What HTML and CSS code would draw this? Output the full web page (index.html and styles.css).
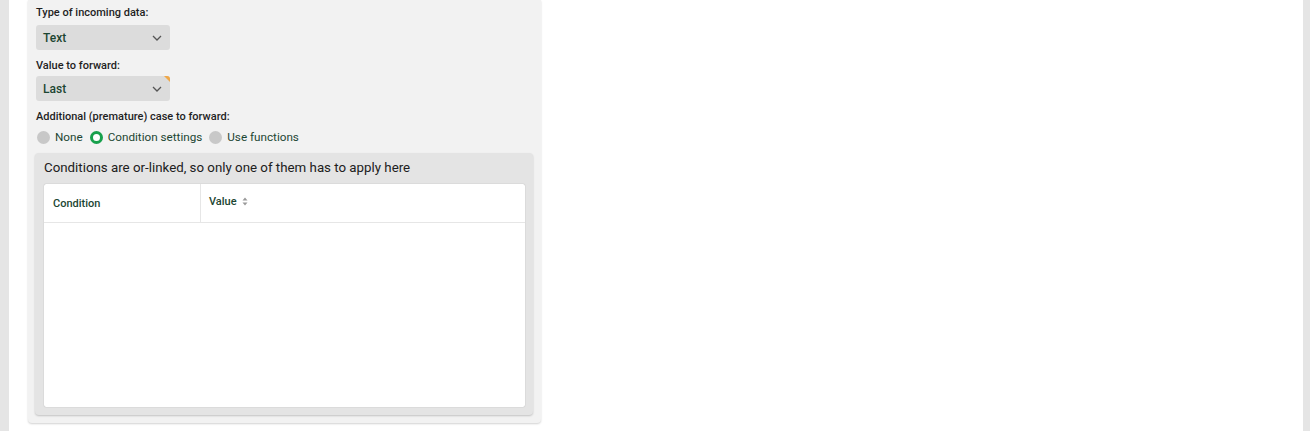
FILE: index.html
```html
<!DOCTYPE html>
<html>
<head>
<meta charset="utf-8">
<link rel="stylesheet" href="styles.css">
</head>
<body>
<div class="page">
  <div class="strip-left"></div>
  <div class="main">
    <div class="panel">
      <div class="label first">Type of incoming data:</div>
      <div class="select first-select">
        <span>Text</span>
        <svg class="chev" width="10" height="6" viewBox="0 0 10 6"><path d="M1 1 L5 5 L9 1" fill="none" stroke="#555" stroke-width="1.3"/></svg>
      </div>
      <div class="label">Value to forward:</div>
      <div class="select">
        <span>Last</span>
        <svg class="chev" width="10" height="6" viewBox="0 0 10 6"><path d="M1 1 L5 5 L9 1" fill="none" stroke="#555" stroke-width="1.3"/></svg>
        <span class="corner"></span>
      </div>
      <div class="label">Additional (premature) case to forward:</div>
      <div class="radios">
        <label class="radio"><span class="dot"></span>None</label>
        <label class="radio"><span class="dot on"></span>Condition settings</label>
        <label class="radio"><span class="dot"></span>Use functions</label>
      </div>
      <div class="inner">
        <div class="inner-title">Conditions are or-linked, so only one of them has to apply here</div>
        <div class="table">
          <div class="thead">
            <div class="th col1">Condition</div>
            <div class="th col2">Value
              <svg class="sort" width="6" height="9" viewBox="0 0 6 9"><path d="M3 0.5 L5.5 3.5 H0.5 Z M3 8.5 L5.5 5.5 H0.5 Z" fill="#9a9a9a"/></svg>
            </div>
          </div>
          <div class="tbody"></div>
        </div>
      </div>
    </div>
  </div>
  <div class="strip-right"></div>
</div>
</body>
</html>
```
FILE: styles.css
```css
html, body {
  margin: 0;
  padding: 0;
  background: #ffffff;
  font-family: Roboto, "Liberation Sans", Arial, sans-serif;
}
.page {
  display: flex;
  height: 431px;
  overflow: hidden;
}
.strip-left {
  width: 9px;
  background: #e5e5e5;
  flex: none;
}
.strip-right {
  width: 7px;
  background: #e5e5e5;
  flex: none;
}
.main {
  flex: 1;
  padding-left: 19px;
}
.panel {
  width: 498px;
  background: #f2f2f2;
  padding: 0 8px 8px 7px;
  border-radius: 0 0 4px 4px;
  box-shadow: 0 1px 2px rgba(0,0,0,0.18);
}
.label {
  font-size: 11px;
  font-weight: 500;
  color: #1f1f1f;
  line-height: 14px;
  margin-top: 9px;
  margin-left: 1px;
}
.label.first {
  padding-top: 6px;
  margin-top: 0;
}
.select {
  position: relative;
  width: 134px;
  height: 25px;
  margin-top: 3px;
  margin-left: 1px;
  background: #dcdcdc;
  border-radius: 3px;
  display: flex;
  align-items: center;
  justify-content: space-between;
  padding: 0 8px 0 7px;
  box-sizing: border-box;
  font-size: 12px;
  font-weight: 500;
  color: #1c4632;
}
.select.first-select {
  margin-top: 5px;
}
.chev {
  display: block;
}
.corner {
  position: absolute;
  right: 0;
  top: 0;
  width: 0;
  height: 0;
  border-top: 6px solid #f0a848;
  border-left: 6px solid transparent;
  border-top-right-radius: 3px;
}
.radios {
  display: flex;
  align-items: center;
  height: 14px;
  margin-top: 6px;
  margin-left: 2px;
}
.radio {
  display: flex;
  align-items: center;
  font-size: 11.7px;
  color: #1c4632;
  margin-right: 7px;
}
.dot {
  width: 13px;
  height: 13px;
  border-radius: 50%;
  background: #c8c8c8;
  margin-right: 5px;
  box-sizing: border-box;
}
.dot.on {
  background: #ffffff;
  border: 3.5px solid #17a04c;
}
.inner {
  margin-top: 9px;
  background: #e4e4e4;
  border-radius: 4px;
  padding: 6px 8px 8px 9px;
  box-shadow: 0 1px 2px rgba(0,0,0,0.2);
}
.inner-title {
  font-size: 13.3px;
  color: #202020;
  line-height: 18px;
  margin-bottom: 7px;
}
.table {
  background: #ffffff;
  height: 223px;
  border-radius: 2px;
  box-shadow: 0 0 1px rgba(0,0,0,0.35);
}
.thead {
  display: flex;
  height: 38px;
  border-bottom: 1px solid #e6e6e6;
}
.th {
  font-size: 11px;
  font-weight: 500;
  color: #1c4632;
  display: flex;
  align-items: center;
  box-sizing: border-box;
}
.col1 {
  width: 157px;
  padding-left: 9px;
  border-right: 1px solid #e6e6e6;
}
.col2 {
  flex: 1;
  padding-left: 8px;
  padding-bottom: 4px;
}
.sort {
  margin-left: 5px;
}
```
